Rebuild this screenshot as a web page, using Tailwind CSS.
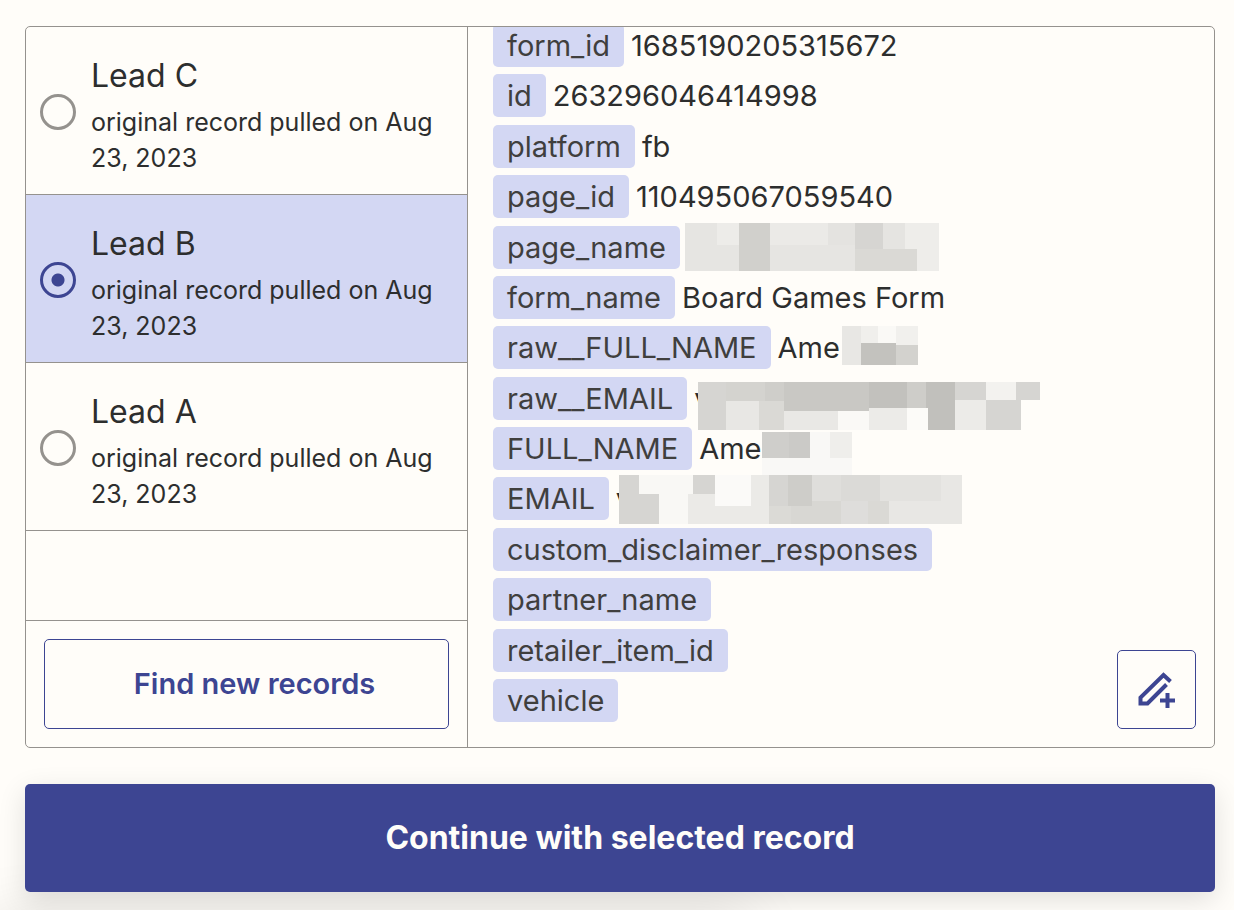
<!DOCTYPE html>
<html lang="en">
<head>
<meta charset="utf-8">
<meta name="viewport" content="width=device-width, initial-scale=1">
<title>Select a record</title>
<script src="https://cdn.jsdelivr.net/npm/@tailwindcss/browser@4"></script>
</head>
<body class="bg-[#fffdf9] font-['Inter',sans-serif] text-[#2d2e2e]">
<main class="relative min-h-screen overflow-hidden pt-[26px] pr-[19px] pb-[18px] pl-[25px]">
  <div class="absolute -bottom-14 left-0 h-10 w-3/5 shadow-[0_0_60px_10px_rgba(0,0,0,0.12)]"></div>

  <section class="relative flex overflow-hidden rounded-[5px] border border-[#95928e] bg-[#fffdf9]">
    <div class="flex w-[442px] shrink-0 flex-col border-r border-[#95928e]">
      <fieldset class="flex-1 pb-[89px]">
        <label class="flex items-center gap-[15px] border-b border-[#95928e] pr-4 pl-[14px]">
          <input type="radio" name="record" class="mt-0.5 size-9 shrink-0 appearance-none rounded-full border-3 border-[#95928e]">
          <span class="block pt-[25px] pb-[18px]">
            <span class="block text-[32px] leading-[48px]">Lead C</span>
            <span class="mt-1 block text-[25px] leading-9">original record pulled on Aug 23, 2023</span>
          </span>
        </label>
        <label class="flex items-center gap-[15px] border-b border-[#95928e] bg-[#d3d7f3] pr-4 pl-[14px]">
          <input type="radio" name="record" checked class="mt-0.5 size-9 shrink-0 appearance-none rounded-full border-3 border-[#3d4592] bg-[radial-gradient(circle,#3d4592_6px,transparent_7px)]">
          <span class="block pt-[25px] pb-[18px]">
            <span class="block text-[32px] leading-[48px]">Lead B</span>
            <span class="mt-1 block text-[25px] leading-9">original record pulled on Aug 23, 2023</span>
          </span>
        </label>
        <label class="flex items-center gap-[15px] border-b border-[#95928e] pr-4 pl-[14px]">
          <input type="radio" name="record" class="mt-0.5 size-9 shrink-0 appearance-none rounded-full border-3 border-[#95928e]">
          <span class="block pt-[25px] pb-[18px]">
            <span class="block text-[32px] leading-[48px]">Lead A</span>
            <span class="mt-1 block text-[25px] leading-9">original record pulled on Aug 23, 2023</span>
          </span>
        </label>
      </fieldset>
      <div class="border-t border-[#95928e] p-[18px]">
        <button type="button" class="h-[90px] w-full rounded-[5px] border border-[#3d4592] pl-4 text-[29px] font-semibold text-[#3d4592]">Find new records</button>
      </div>
    </div>

    <div class="-mt-[3px] flex min-w-0 flex-1 flex-col pb-[25px] pl-[25px]">
      <dl class="flex min-h-[698px] flex-1 flex-col justify-between text-[29px] leading-[43px] whitespace-nowrap">
        <div class="flex gap-[7px]"><dt class="rounded-[5px] bg-[#d3d7f3] px-[14px] text-[#403f3e]">form_id</dt><dd>1685190205315672</dd></div>
        <div class="flex gap-[7px]"><dt class="rounded-[5px] bg-[#d3d7f3] px-[14px] text-[#403f3e]">id</dt><dd>263296046414998</dd></div>
        <div class="flex gap-[7px]"><dt class="rounded-[5px] bg-[#d3d7f3] px-[14px] text-[#403f3e]">platform</dt><dd>fb</dd></div>
        <div class="flex gap-[7px]"><dt class="rounded-[5px] bg-[#d3d7f3] px-[14px] text-[#403f3e]">page_id</dt><dd>110495067059540</dd></div>
        <div class="flex gap-[7px]"><dt class="rounded-[5px] bg-[#d3d7f3] px-[14px] text-[#403f3e]">page_name</dt>
          <dd class="relative">
            <svg class="absolute -top-[3px] -left-0.5 max-w-none" width="254" height="48" shape-rendering="crispEdges" aria-label="redacted">
              <path fill="#e6e5e2" d="M0 0h254v48H0z"/><path fill="#edece9" d="M32 0h22v22H32z"/><path fill="#d1d0cc" d="M54 0h31v48H54z"/><path fill="#ebeae7" d="M85 0h58v22H85z"/><path fill="#e4e3e0" d="M143 0h27v22h-27z"/><path fill="#d6d5d2" d="M170 0h28v26h-28z"/><path fill="#e5e4e1" d="M198 0h22v26h-22z"/><path fill="#eeedea" d="M220 0h34v48h-34z"/><path fill="#dad9d5" d="M170 26h62v22h-62z"/>
            </svg>
          </dd></div>
        <div class="flex gap-[7px]"><dt class="rounded-[5px] bg-[#d3d7f3] px-[14px] text-[#403f3e]">form_name</dt><dd>Board Games Form</dd></div>
        <div class="flex gap-[7px]"><dt class="rounded-[5px] bg-[#d3d7f3] px-[14px] text-[#403f3e]">raw__FULL_NAME</dt>
          <dd class="relative">Ame
            <svg class="absolute top-0 left-16 max-w-none" width="76" height="39" shape-rendering="crispEdges" aria-label="redacted">
              <path fill="#e8e7e4" d="M0 0h19v39H0z"/><path fill="#f0efec" d="M19 0h17v17H19z"/><path fill="#faf9f6" d="M36 0h18v17H36z"/><path fill="#f1f0ed" d="M54 0h22v19H54z"/><path fill="#c3c2be" d="M19 17h35v22H19z"/><path fill="#d3d2ce" d="M54 19h22v20H54z"/>
            </svg>
          </dd></div>
        <div class="flex gap-[7px]"><dt class="rounded-[5px] bg-[#d3d7f3] px-[14px] text-[#403f3e]">raw__EMAIL</dt>
          <dd class="relative">v
            <svg class="absolute top-[5px] left-1 max-w-none" width="342" height="48" shape-rendering="crispEdges" aria-label="redacted">
              <path fill="#d6d5d2" d="M0 0h28v48H0z"/><path fill="#d4d3cf" d="M28 0h39v19H28z"/><path fill="#cfceca" d="M67 0h19v19H67z"/><path fill="#c9c8c4" d="M86 0h85v29H86z"/><path fill="#c2c1bd" d="M171 0h38v26h-38z"/><path fill="#cecdc9" d="M209 0h19v26h-19z"/><path fill="#c1c0bc" d="M228 0h29v48h-27V26h-2z"/><path fill="#d6d5d2" d="M257 0h31v18h-31z"/><path fill="#f3f2ef" d="M288 0h30v18h-30z"/><path fill="#d6d5d2" d="M318 0h24v18h-24z"/>
              <path fill="#e8e7e4" d="M28 19h33v29H28z"/><path fill="#dad9d5" d="M61 19h25v29H61z"/><path fill="#e9e8e5" d="M86 29h54v19H86z"/><path fill="#faf9f6" d="M140 29h31v19h-31z"/><path fill="#ecebe8" d="M171 26h38v22h-38z"/><path fill="#fcfbf8" d="M209 26h21v22h-21z"/><path fill="#ecebe8" d="M257 18h31v30h-31z"/><path fill="#d6d5d2" d="M288 18h35v30h-35z"/>
            </svg>
          </dd></div>
        <div class="flex gap-[7px]"><dt class="rounded-[5px] bg-[#d3d7f3] px-[14px] text-[#403f3e]">FULL_NAME</dt>
          <dd class="relative">Ame
            <svg class="absolute top-[5px] left-[63px] max-w-none" width="90" height="43" shape-rendering="crispEdges" aria-label="redacted">
              <path fill="#cfcecb" d="M0 0h27v26H0z"/><path fill="#cbcac7" d="M27 0h21v26H27z"/><path fill="#f9f8f6" d="M48 0h20v26H48z"/><path fill="#efeeeb" d="M68 0h22v26H68z"/><path fill="#f9f8f6" d="M0 26h90v17H0z"/>
            </svg>
          </dd></div>
        <div class="flex gap-[7px]"><dt class="rounded-[5px] bg-[#d3d7f3] px-[14px] text-[#403f3e]">EMAIL</dt>
          <dd class="relative">v
            <svg class="absolute -top-0.5 left-[3px] max-w-none" width="343" height="49" shape-rendering="crispEdges" aria-label="redacted">
              <path fill="#d6d5d2" d="M0 0h20v19h20v30H0z"/><path fill="#f9f8f5" d="M20 0h54v19h-5v30H40V19H20z"/><path fill="#d6d5d2" d="M74 0h22v19H74z"/><path fill="#ebeae7" d="M69 19h27v12h54v18H69z"/><path fill="#fbfaf8" d="M96 0h36v31H96z"/><path fill="#ebeae7" d="M132 0h18v31h-18z"/><path fill="#d6d5d2" d="M150 0h19v31h-19z"/><path fill="#cecdc9" d="M169 0h24v31h-24z"/><path fill="#dbdad6" d="M150 31h22v18h-22z"/><path fill="#d8d7d3" d="M172 31h21v-5h29v23h-50z"/>
              <path fill="#dfdedb" d="M193 0h29v26h-29z"/><path fill="#dbdad7" d="M222 0h39v26h-39z"/><path fill="#e3e2df" d="M261 0h61v26h-61z"/><path fill="#e8e7e4" d="M322 0h21v49h-21z"/><path fill="#dedddb" d="M222 26h27v23h-27z"/><path fill="#dad9d5" d="M249 26h21v23h-21z"/><path fill="#e8e7e4" d="M270 26h52v23h-52z"/>
            </svg>
          </dd></div>
        <div class="flex"><dt class="rounded-[5px] bg-[#d3d7f3] px-[14px] text-[#403f3e]">custom_disclaimer_responses</dt><dd></dd></div>
        <div class="flex"><dt class="rounded-[5px] bg-[#d3d7f3] px-[14px] text-[#403f3e]">partner_name</dt><dd></dd></div>
        <div class="flex"><dt class="rounded-[5px] bg-[#d3d7f3] px-[14px] text-[#403f3e]">retailer_item_id</dt><dd></dd></div>
        <div class="flex"><dt class="rounded-[5px] bg-[#d3d7f3] px-[14px] text-[#403f3e]">vehicle</dt><dd></dd></div>
      </dl>
    </div>

    <button type="button" aria-label="Edit record" class="absolute right-[18px] bottom-[18px] flex size-[79px] items-center justify-center rounded-[5px] border border-[#3d4592] bg-[#fffdf9] text-[#3d4592]">
      <svg width="38" height="38" viewBox="0 0 38 38" fill="none" stroke="currentColor" stroke-width="4">
        <path d="M32.500 10.500 25.500 4 2.500 26.500V32.500h7L28.500 13.500"/>
        <path d="M29.500 22v15M22 29.500h15"/>
      </svg>
    </button>
  </section>

  <button type="button" class="relative mt-9 h-[108px] w-full rounded-[5px] bg-[#3d4592] text-[32px] font-bold text-[#fffdf9] shadow-[0_8px_28px_rgba(0,0,0,0.12)]">Continue with selected record</button>
</main>
</body>
</html>
